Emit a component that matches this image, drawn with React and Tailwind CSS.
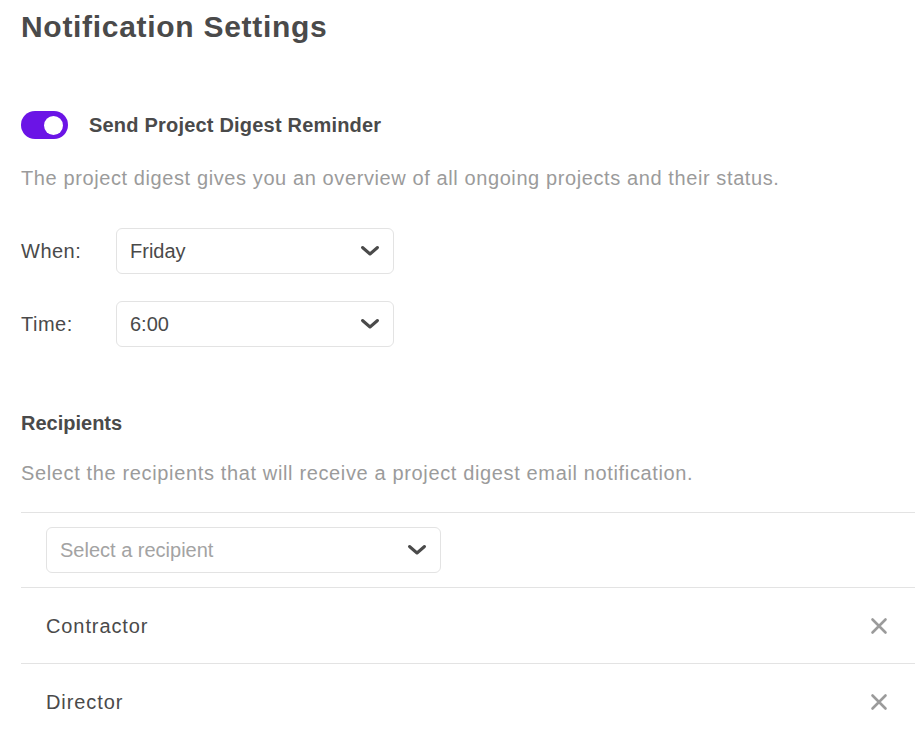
import React from "react";

function Chevron() {
  return (
    <svg width="20" height="12" viewBox="0 0 20 12" fill="none">
      <path d="M2.5 2.5 L10 9 L17.5 2.5" stroke="#4a4a4a" strokeWidth="3" strokeLinecap="round" strokeLinejoin="round" />
    </svg>
  );
}

function XIcon() {
  return (
    <svg width="18" height="18" viewBox="0 0 18 18" fill="none">
      <path d="M2.5 2.5 L15.5 15.5 M15.5 2.5 L2.5 15.5" stroke="#9b9b9b" strokeWidth="2.6" strokeLinecap="round" />
    </svg>
  );
}

function Select({ value, placeholder, width }) {
  return (
    <div className={`${width} h-[46px] flex items-center justify-between border border-[#e3e3e3] rounded-[6px] pl-[13px] pr-[13px] bg-white`}>
      <span className={`text-[20px] ${placeholder ? "text-[#a3a3a3]" : "text-[#4a4a4a]"}`}>{value}</span>
      <Chevron />
    </div>
  );
}

export default function App() {
  return (
    <div className="min-h-screen bg-white pl-[21px] text-[#4a4a4a]" style={{ fontFamily: '"Liberation Sans", Arial, sans-serif' }}>
      <h1 className="pt-[9px] text-[30px] leading-[36px] font-bold tracking-[0.7px] text-[#4a4a4a]">Notification Settings</h1>

      <div className="mt-[66px] flex items-center h-[28px]">
        <div className="w-[47px] h-[28px] rounded-full bg-[#6b14e6] flex items-center justify-end pr-[5px]">
          <div className="w-[19px] h-[19px] rounded-full bg-white" />
        </div>
        <span className="ml-[21px] text-[20px] font-bold leading-[28px] tracking-[0.2px]">Send Project Digest Reminder</span>
      </div>

      <p className="mt-[25px] text-[20px] leading-[28px] tracking-[0.6px] text-[#9b9b9b]">
        The project digest gives you an overview of all ongoing projects and their status.
      </p>

      <div className="mt-[36px] flex items-center">
        <span className="w-[95px] text-[20px] tracking-[0.5px]">When:</span>
        <Select value="Friday" width="w-[278px]" />
      </div>

      <div className="mt-[27px] flex items-center">
        <span className="w-[95px] text-[20px] tracking-[0.5px]">Time:</span>
        <Select value="6:00" width="w-[278px]" />
      </div>

      <h2 className="mt-[62px] text-[20px] leading-[28px] font-bold">Recipients</h2>
      <p className="mt-[22px] text-[20px] leading-[28px] tracking-[0.64px] text-[#9b9b9b]">
        Select the recipients that will receive a project digest email notification.
      </p>

      <div className="mt-[25px]">
        <div className="border-t border-[#e3e3e3] pt-[14px] pb-[14px] pl-[25px]">
          <Select value="Select a recipient" placeholder width="w-[395px]" />
        </div>
        {["Contractor", "Director"].map((name) => (
          <div key={name} className="border-t border-[#e3e3e3] h-[76px] flex items-center justify-between pl-[25px] pr-[27px]">
            <span className="text-[20px] tracking-[0.9px]">{name}</span>
            <XIcon />
          </div>
        ))}
        <div className="border-t border-[#e3e3e3]" />
      </div>
    </div>
  );
}
